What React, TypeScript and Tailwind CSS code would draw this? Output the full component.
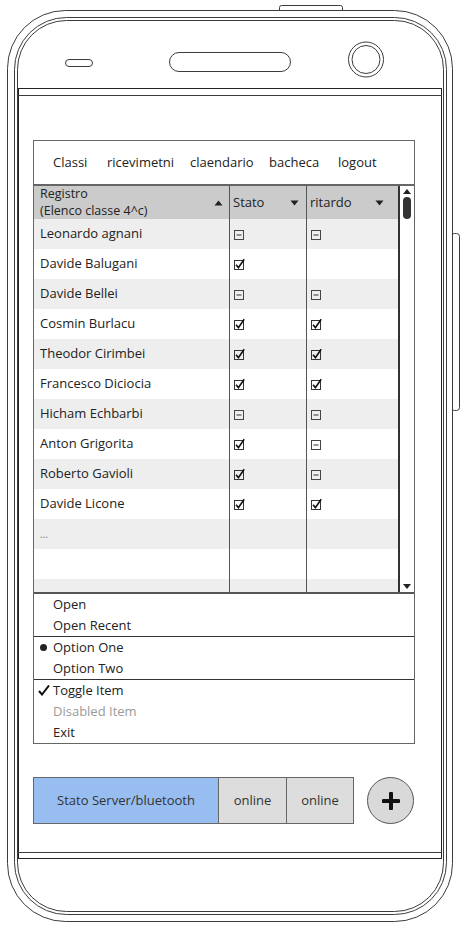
import React from "react";

type Mark = "c" | "m" | "";

const rows: [string, Mark, Mark][] = [
  ["Leonardo agnani", "m", "m"],
  ["Davide Balugani", "c", ""],
  ["Davide Bellei", "m", "m"],
  ["Cosmin Burlacu", "c", "c"],
  ["Theodor Cirimbei", "c", "c"],
  ["Francesco Diciocia", "c", "c"],
  ["Hicham Echbarbi", "m", "m"],
  ["Anton Grigorita", "c", "m"],
  ["Roberto Gavioli", "c", "m"],
  ["Davide Licone", "c", "c"],
  ["...", "", ""],
  ["", "", ""],
  ["", "", ""],
];

function CheckIcon() {
  return (
    <svg width="12" height="12" viewBox="0 0 12 12">
      <rect x="0.5" y="2.5" width="9" height="9" fill="none" stroke="#333" />
      <path d="M2 6.8 L4.4 9.6 L10.2 1.2" fill="none" stroke="#111" strokeWidth="1.6" />
    </svg>
  );
}

function MixedIcon() {
  return (
    <svg width="12" height="12" viewBox="0 0 12 12">
      <rect x="0.5" y="2.5" width="9" height="9" fill="none" stroke="#444" />
      <line x1="2.5" y1="7" x2="7.5" y2="7" stroke="#333" />
    </svg>
  );
}

function MarkCell({ m }: { m: Mark }) {
  if (m === "c") return <CheckIcon />;
  if (m === "m") return <MixedIcon />;
  return null;
}

function TriUp() {
  return (
    <svg width="9" height="6" viewBox="0 0 9 6">
      <path d="M0.5 5.5 L4.5 0.5 L8.5 5.5 Z" fill="#222" />
    </svg>
  );
}

function TriDown() {
  return (
    <svg width="9" height="6" viewBox="0 0 9 6">
      <path d="M0.5 0.5 L4.5 5.5 L8.5 0.5 Z" fill="#222" />
    </svg>
  );
}

function PhoneFrame() {
  const s = "#3c3c3c";
  return (
    <svg
      className="absolute inset-0"
      width="464"
      height="931"
      viewBox="0 0 464 931"
    >
      <rect x="279.5" y="5.5" width="63" height="7" rx="2" fill="#fff" stroke={s} />
      <rect x="451.5" y="233.5" width="8" height="177" rx="3" fill="#fff" stroke={s} />
      <rect x="7.5" y="10.5" width="445" height="911" rx="58" fill="#fff" stroke={s} />
      <rect x="14.5" y="17.5" width="432" height="897" rx="52" fill="none" stroke={s} />
      <rect x="17.5" y="20.5" width="426" height="891" rx="49" fill="none" stroke={s} />
      <rect x="18.5" y="88.5" width="423" height="770" fill="#fff" stroke="#222" />
      <line x1="18" y1="95.5" x2="442" y2="95.5" stroke={s} />
      <line x1="18" y1="852.5" x2="442" y2="852.5" stroke={s} />
      <rect x="65.5" y="59.5" width="27" height="7" rx="3.5" fill="none" stroke={s} />
      <rect x="169.5" y="52.5" width="121" height="19" rx="9.5" fill="none" stroke={s} />
      <circle cx="366" cy="59.5" r="17.5" fill="none" stroke={s} />
      <circle cx="366" cy="59.5" r="14" fill="none" stroke={s} />
    </svg>
  );
}

export default function App() {
  return (
    <div
      className="relative w-[464px] h-[931px] bg-white overflow-hidden text-[13px] text-[#222]"
      style={{ fontFamily: '"Open Sans", "Liberation Sans", sans-serif' }}
    >
      <PhoneFrame />
      <div className="relative flex flex-col pt-[140px] pl-[33px]">
        <div className="w-[382px] border border-[#666] bg-white flex flex-col">
          {/* nav */}
          <div className="h-[45px] border-b-2 border-[#666] flex items-center pl-[19px]">
            <span className="w-[54px]">Classi</span>
            <span className="w-[83px]">ricevimetni</span>
            <span className="w-[79px]">claendario</span>
            <span className="w-[69px]">bacheca</span>
            <span>logout</span>
          </div>
          {/* table */}
          <div className="h-[408px] border-b-2 border-[#555] flex overflow-hidden">
            <div className="w-[364px] flex flex-col">
              <div className="h-[33px] shrink-0 bg-[#cbcbcb] flex">
                <div className="w-[196px] border-r border-[#555] flex items-center justify-between pl-[6px] pr-[6px]">
                  <div className="flex flex-col text-[12.5px] leading-[16.5px]">
                    <span>Registro</span>
                    <span>(Elenco classe 4^c)</span>
                  </div>
                  <TriUp />
                </div>
                <div className="w-[77px] border-r border-[#555] flex items-center justify-between pl-[3px] pr-[7px]">
                  <span>Stato</span>
                  <TriDown />
                </div>
                <div className="flex-1 flex items-center justify-between pl-[3px] pr-[14px]">
                  <span>ritardo</span>
                  <TriDown />
                </div>
              </div>
              {rows.map((r, i) => (
                <div
                  key={i}
                  className={
                    "h-[30px] shrink-0 flex " +
                    (i % 2 === 0 ? "bg-[#eeeeee]" : "bg-white")
                  }
                >
                  <div
                    className={
                      "w-[196px] border-r border-[#555] flex items-center pl-[6px] " +
                      (r[0] === "..." ? "text-[#777] text-[10px]" : "")
                    }
                  >
                    {r[0]}
                  </div>
                  <div className="w-[77px] border-r border-[#555] flex items-center pl-[4px]">
                    <MarkCell m={r[1]} />
                  </div>
                  <div className="flex-1 flex items-center pl-[4px]">
                    <MarkCell m={r[2]} />
                  </div>
                </div>
              ))}
            </div>
            <div className="w-[16px] border-l-2 border-[#333] flex flex-col items-center bg-white">
              <div className="pt-[3px] flex justify-center">
                <svg width="8" height="5" viewBox="0 0 8 5">
                  <path d="M0 5 L4 0 L8 5 Z" fill="#222" />
                </svg>
              </div>
              <div className="mt-[3px] w-[8px] h-[22px] rounded-full bg-[#333]" />
              <div className="flex-1" />
              <div className="pb-[3px] flex justify-center">
                <svg width="8" height="5" viewBox="0 0 8 5">
                  <path d="M0 0 L4 5 L8 0 Z" fill="#222" />
                </svg>
              </div>
            </div>
          </div>
          {/* menu */}
          <div className="flex flex-col">
            <div className="h-[21px] flex items-center pl-[19px]">Open</div>
            <div className="h-[21px] flex items-center pl-[19px]">Open Recent</div>
            <div className="h-px bg-[#333]" />
            <div className="h-[21px] flex items-center relative pl-[19px]">
              <span className="absolute left-[6px] top-[7px] w-[7px] h-[7px] rounded-full bg-[#222]" />
              Option One
            </div>
            <div className="h-[21px] flex items-center pl-[19px]">Option Two</div>
            <div className="h-px bg-[#333]" />
            <div className="h-[21px] flex items-center relative pl-[19px]">
              <svg
                className="absolute left-[4px] top-[5px]"
                width="12"
                height="11"
                viewBox="0 0 12 11"
              >
                <path d="M1 6 L4 9.5 L11 0.5" fill="none" stroke="#111" strokeWidth="2" />
              </svg>
              Toggle Item
            </div>
            <div className="h-[21px] flex items-center pl-[19px] text-[#9a9a9a]">Disabled Item</div>
            <div className="h-[21px] flex items-center pl-[19px]">Exit</div>
          </div>
        </div>
        {/* bottom bar */}
        <div className="mt-[33px] flex items-center">
          <div className="flex h-[47px] border border-[#666]">
            <div className="w-[185px] bg-[#98bdf1] flex items-center justify-center border-r border-[#666] text-[#333]">
              Stato Server/bluetooth
            </div>
            <div className="w-[68px] bg-[#dddddd] flex items-center justify-center border-r border-[#666] text-[#333]">
              online
            </div>
            <div className="w-[66px] bg-[#dddddd] flex items-center justify-center text-[#333]">
              online
            </div>
          </div>
          <div className="ml-[13px] w-[47px] h-[47px] rounded-full border border-[#555] bg-[#d9d9d9] flex items-center justify-center">
            <svg width="18" height="18" viewBox="0 0 18 18">
              <path d="M9 1.5 V16.5 M1.5 9 H16.5" stroke="#111" strokeWidth="4" strokeLinecap="round" />
            </svg>
          </div>
        </div>
      </div>
    </div>
  );
}
